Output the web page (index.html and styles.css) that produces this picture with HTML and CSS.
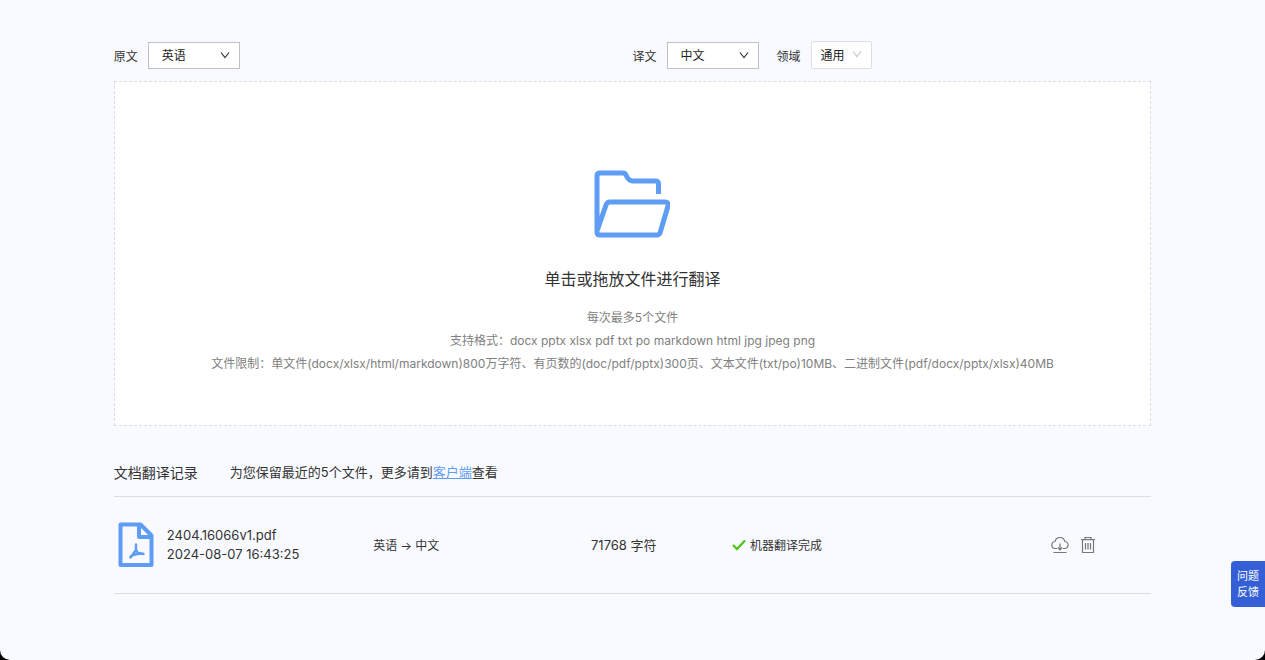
FILE: index.html
```html
<!DOCTYPE html>
<html lang="zh-CN">
<head>
  <meta charset="UTF-8">
  <meta name="viewport" content="width=device-width, initial-scale=1">
  <title>文档翻译</title>
  <link rel="stylesheet" href="styles.css">
</head>
<body>
  <main class="page">
    <div class="container">
      <form class="toolbar">
        <div class="group">
          <label for="source">原文</label>
          <span class="select">
            <select id="source">
              <option selected>英语</option>
              <option>中文</option>
            </select>
            <svg class="arrow" viewBox="0 0 10 8"><path d="M1 1.5l4 5 4-5"/></svg>
          </span>
        </div>
        <div class="group">
          <label for="target">译文</label>
          <span class="select">
            <select id="target">
              <option selected>中文</option>
              <option>英语</option>
            </select>
            <svg class="arrow" viewBox="0 0 10 8"><path d="M1 1.5l4 5 4-5"/></svg>
          </span>
          <label class="domain-label" for="domain">领域</label>
          <span class="select domain">
            <select id="domain">
              <option selected>通用</option>
            </select>
            <svg class="arrow" viewBox="0 0 10 8"><path d="M1 1.5l4 5 4-5"/></svg>
          </span>
        </div>
      </form>

      <label class="upload" for="file">
        <input class="file-input" type="file" id="file" multiple>
        <svg class="folder" viewBox="0 0 76 68">
          <path d="M64.500 24V14q0-3-3-3H39q-4 0-6-4l-1-2q-1-2-3-2H6Q3 3 3 6v56q0 3 3 3h57q2 0 3-2l8-27q1-4-3-4H16q-3 0-4 3L3 61"/>
        </svg>
        <span class="upload-title">单击或拖放文件进行翻译</span>
        <span class="hint">每次最多5个文件</span>
        <span class="hint">支持格式：docx pptx xlsx pdf txt po markdown html jpg jpeg png</span>
        <span class="hint">文件限制：单文件(docx/xlsx/html/markdown)800万字符、有页数的(doc/pdf/pptx)300页、文本文件(txt/po)10MB、二进制文件(pdf/docx/pptx/xlsx)40MB</span>
      </label>

      <div class="records-head">
        <h2>文档翻译记录</h2>
        <p>为您保留最近的5个文件，更多请到<a href="#">客户端</a>查看</p>
      </div>

      <table class="records">
        <tr>
          <td class="col-file">
            <div class="file">
              <svg class="pdf" viewBox="0 0 36 46">
                <path class="sheet" d="M2.5 2.5h20l11 11v29.500h-31z"/>
                <path class="sheet" d="M21 3v12h12"/>
                <path class="mark" d="M18 22.500v5.500l-5.500 7.500M18 28l2 3 5.500 1M12.500 34.500q5-3 12-3"/>
              </svg>
              <div>
                <div>2404.16066v1.pdf</div>
                <div>2024-08-07 16:43:25</div>
              </div>
            </div>
          </td>
          <td class="col-lang">英语 → 中文</td>
          <td class="col-count">71768 字符</td>
          <td>
            <div class="status">
              <svg class="check" viewBox="0 0 14 12"><path d="M1 6l4 4 8-8.500"/></svg>
              机器翻译完成
            </div>
          </td>
          <td class="col-actions">
            <div class="actions">
              <button type="button" aria-label="下载">
                <svg viewBox="0 0 18 18">
                  <path d="M6 12.500H4.500a3.500 3.500 0 0 1-.5-7 5 5 0 0 1 9.800 0 3.500 3.500 0 0 1-.3 7H12M9 7.500v6M6.800 11.500L9 13.800l2.200-2.300M2.500 16.500h13"/>
                </svg>
              </button>
              <button type="button" aria-label="删除">
                <svg viewBox="0 0 18 18">
                  <path d="M2 3.700h14M6 3.500V1.500h6v2M3.500 4v12.500h11V4M6.500 7v6.500M9 7v6.500M11.500 7v6.500"/>
                </svg>
              </button>
            </div>
          </td>
        </tr>
      </table>
    </div>
  </main>
  <button class="feedback" type="button">问题<br>反馈</button>
</body>
</html>
```
FILE: styles.css
```css
* {
  box-sizing: border-box;
}

html {
  background: #000;
}

body {
  margin: 0;
  font-family: Inter, "Noto Sans CJK SC", sans-serif;
  font-size: 12px;
  color: #333;
}

.page {
  min-height: 100vh;
  padding-top: 41px;
  background: #f9faff;
  border-radius: 0 0 10px 10px;
}

.container {
  width: 82%;
  margin: 0 auto;
}

.toolbar {
  display: grid;
  grid-template-columns: 1fr 1fr;
  margin-bottom: 12px;
}

.group {
  display: flex;
  align-items: center;
  gap: 10px;
  height: 28px;
}

.domain-label {
  margin-left: 8px;
}

.select {
  position: relative;
  display: flex;
}

select {
  appearance: none;
  width: 92px;
  height: 27px;
  padding: 0 13px;
  font: inherit;
  color: #222;
  background: #fff;
  border: 1px solid #bfc1c7;
  border-radius: 0;
}

.domain select {
  width: 61px;
  height: 28px;
  padding: 0 9px;
  border-color: #dcdee3;
  border-radius: 2px;
}

.arrow {
  position: absolute;
  top: 9px;
  right: 10px;
  width: 10px;
  height: 8px;
  fill: none;
  stroke: #333;
  stroke-width: 1.2;
  pointer-events: none;
}

.domain .arrow {
  stroke: #c4c4c4;
}

.upload {
  display: flex;
  flex-direction: column;
  align-items: center;
  padding: 88px 20px 50px;
  background: #fff;
  border: 1px dashed #dcdde2;
  cursor: pointer;
}

.file-input {
  position: absolute;
  opacity: 0;
  pointer-events: none;
}

.folder {
  width: 76px;
  height: 68px;
  margin-bottom: 28px;
  fill: none;
  stroke: #5f9df5;
  stroke-width: 5;
  stroke-linejoin: round;
}

.upload-title {
  margin-bottom: 14px;
  font-size: 16px;
  line-height: 26px;
  color: #333;
}

.hint {
  line-height: 23px;
  color: #808080;
}

.records-head {
  display: flex;
  align-items: center;
  gap: 32px;
  height: 71px;
  padding-top: 21px;
  border-bottom: 1px solid #dcdde1;
}

.records-head h2 {
  margin: 0;
  font-size: 14px;
  font-weight: 400;
}

.records-head p {
  margin: 0;
  font-size: 13px;
}

.records-head a {
  color: #5f9df5;
}

.records {
  width: 100%;
  table-layout: fixed;
  border-collapse: collapse;
  border-bottom: 1px solid #dcdde1;
}

.records td {
  height: 96px;
  padding: 0;
}

.records .col-file {
  width: 25%;
  font-size: 13px;
}

.col-lang {
  width: 21%;
}

.records .col-count {
  width: 141px;
  font-size: 13px;
}

.col-actions {
  width: 100px;
}

.file {
  display: flex;
  align-items: center;
  gap: 13px;
  padding-left: 4px;
  line-height: 19px;
}

.pdf {
  width: 36px;
  height: 46px;
  fill: none;
  stroke: #5f9df5;
}

.sheet {
  stroke-width: 4;
  stroke-linejoin: round;
}

.mark {
  stroke-width: 2.4;
  stroke-linecap: round;
  stroke-linejoin: round;
}

.status {
  display: flex;
  align-items: center;
  gap: 4px;
}

.check {
  width: 14px;
  height: 12px;
  fill: none;
  stroke: #52c41a;
  stroke-width: 2.4;
}

.actions {
  display: flex;
  gap: 10px;
}

.actions button {
  width: 18px;
  height: 18px;
  padding: 0;
  background: none;
  border: 0;
  cursor: pointer;
}

.actions svg {
  display: block;
  fill: none;
  stroke: #777;
  stroke-width: 1.2;
}

.feedback {
  position: fixed;
  right: 0;
  bottom: 53px;
  width: 34px;
  height: 46px;
  padding: 0;
  font-family: inherit;
  font-size: 11px;
  line-height: 16px;
  color: #fff;
  background: #355fd6;
  border: 0;
  border-radius: 4px 0 0 4px;
  cursor: pointer;
}
```
